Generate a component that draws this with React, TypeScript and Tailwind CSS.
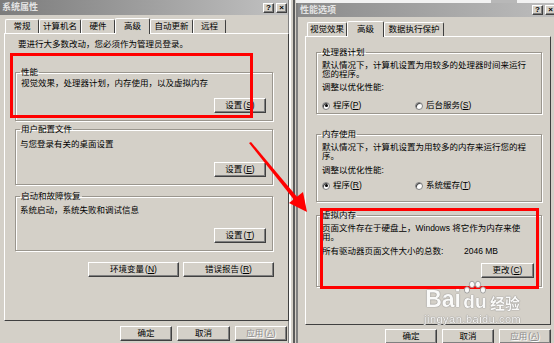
import React from 'react';

const raised =
  'bg-[#d4d0c8] border border-t-white border-l-white border-r-[#404040] border-b-[#404040] shadow-[inset_-1px_-1px_0_#808080]';

type BtnProps = { label: string; acc?: string; className?: string; disabled?: boolean };

const Btn = ({ label, acc, className = '', disabled = false }: BtnProps) => (
  <div
    className={`${raised} h-[15px] flex items-center justify-center text-[8.5px] leading-none ${
      disabled ? 'text-[#8c8c8c] [text-shadow:1px_1px_0_#fff]' : 'text-black'
    } ${className}`}
  >
    <span>{label}</span>
    {acc && (
      <span className="ml-[1px]">
        (<span className="underline">{acc}</span>)
      </span>
    )}
  </div>
);

const CapBtn = ({ children }: { children: React.ReactNode }) => (
  <div className={`${raised} w-[11px] h-[10px] flex items-center justify-center text-[8px] font-bold leading-none text-black`}>
    {children}
  </div>
);

const Tab = ({ label, className = '', active = false }: { label: string; className?: string; active?: boolean }) => (
  <div
    className={`border-t border-l border-r border-t-white border-l-white border-r-[#404040] rounded-t-[2px] flex items-center justify-center text-[8.5px] leading-none bg-[#d4d0c8] ${
      active ? 'h-[16px] relative z-10 -mb-px' : 'h-[14px]'
    } ${className}`}
  >
    {label}
  </div>
);

const Group = ({ title, className = '', children }: { title: string; className?: string; children: React.ReactNode }) => (
  <fieldset className={`border border-[#9a968e] shadow-[inset_1px_1px_0_#fff,1px_1px_0_#fff] ${className}`}>
    <legend className="ml-[4px] px-[1px] text-[8.5px] leading-[10px]">{title}</legend>
    {children}
  </fieldset>
);

const Radio = ({ label, acc, checked = false, className = '' }: { label: string; acc: string; checked?: boolean; className?: string }) => (
  <div className={`flex items-center gap-[3px] text-[8.5px] leading-[9px] ${className}`}>
    <span className="w-[8px] h-[8px] rounded-full bg-white border border-[#808080] shadow-[inset_1px_1px_0_#404040] flex items-center justify-center">
      {checked && <span className="w-[3px] h-[3px] rounded-full bg-black" />}
    </span>
    <span>
      {label}(<span className="underline">{acc}</span>)
    </span>
  </div>
);

const SystemProperties = () => (
  <div className="w-[289px] shrink-0 flex flex-col bg-[#d4d0c8] border-r border-[#808080]">
    <div className="h-[15px] flex items-center bg-gradient-to-r from-[#7c7c7c] to-[#c2c2c2] pl-[2px] pr-[1px]">
      <span className="text-[9px] font-bold text-[#e4e4e4] leading-none">系统属性</span>
      <div className="ml-auto flex gap-[2px]">
        <CapBtn>?</CapBtn>
        <CapBtn>×</CapBtn>
      </div>
    </div>

    <div className="mt-[2px] h-[16px] flex items-end pl-[5px]">
      <Tab label="常规" className="w-[34px]" />
      <Tab label="计算机名" className="w-[42px]" />
      <Tab label="硬件" className="w-[34px]" />
      <Tab label="高级" className="w-[35px]" active />
      <Tab label="自动更新" className="w-[43px]" />
      <Tab label="远程" className="w-[33px]" />
    </div>

    <div className="ml-[4px] w-[285px] h-[288px] border border-t-white border-l-white border-r-[#404040] border-b-[#404040] pl-[10px] flex flex-col">
      <p className="mt-[5px] ml-[3px] text-[8.5px] leading-[10px]">要进行大多数改动，您必须作为管理员登录。</p>

      <Group title="性能" className="mt-[18px] w-[258px] h-[54px]">
        <div className="flex flex-col">
          <p className="mt-[1px] ml-[5px] text-[8.5px] leading-[10px]">视觉效果，处理器计划，内存使用，以及虚拟内存</p>
          <Btn label="设置" acc="S" className="mt-[10px] self-end mr-[6px] w-[52px]" />
        </div>
      </Group>

      <Group title="用户配置文件" className="mt-[3px] w-[258px] h-[61px]">
        <div className="flex flex-col">
          <p className="mt-[5px] ml-[4px] text-[8.5px] leading-[10px]">与您登录有关的桌面设置</p>
          <Btn label="设置" acc="E" className="mt-[13px] self-end mr-[6px] w-[52px]" />
        </div>
      </Group>

      <Group title="启动和故障恢复" className="mt-[6px] w-[258px] h-[60px]">
        <div className="flex flex-col">
          <p className="mt-[4px] ml-[4px] text-[8.5px] leading-[10px]">系统启动，系统失败和调试信息</p>
          <Btn label="设置" acc="T" className="mt-[13px] self-end mr-[6px] w-[52px]" />
        </div>
      </Group>

      <div className="mt-[11px] w-[259px] flex justify-end gap-[4px]">
        <Btn label="环境变量" acc="N" className="w-[91px]" />
        <Btn label="错误报告" acc="R" className="w-[91px]" />
      </div>
    </div>

    <div className="mt-[5px] flex justify-end gap-[5px] pr-[1px]">
      <Btn label="确定" className="w-[52px]" />
      <Btn label="取消" className="w-[53px]" />
      <Btn label="应用" acc="A" className="w-[52px]" disabled />
    </div>
  </div>
);

const PerformanceOptions = () => (
  <div className="flex-1 flex flex-col min-w-0">
    <div className="h-[5px] bg-[#f2f2f2] flex justify-end pr-[37px]">
      <div className="w-[26px] h-[3px] bg-[#b8b8b8]" />
    </div>
    <div className="flex-1 flex flex-col bg-[#d4d0c8] border-l-2 border-l-[#808080]">
      <div className="h-[14px] flex items-center bg-gradient-to-r from-[#8a8a8a] to-[#bdbdbd] pl-[2px]">
        <span className="text-[9px] font-bold text-[#e4e4e4] leading-none">性能选项</span>
        <div className="ml-auto flex gap-[2px] -mr-[2px]">
          <CapBtn>?</CapBtn>
          <CapBtn>×</CapBtn>
        </div>
      </div>

      <div className="mt-[3px] h-[16px] flex items-end pl-[9px]">
        <Tab label="视觉效果" className="w-[40px]" />
        <Tab label="高级" className="w-[37px]" active />
        <Tab label="数据执行保护" className="w-[60px]" />
      </div>

      <div className="ml-[7px] w-[246px] h-[289px] border border-t-white border-l-white border-r-[#404040] border-b-[#404040] pl-[10px] flex flex-col">
        <Group title="处理器计划" className="mt-[10px] w-[226px] h-[67px]">
          <div className="flex flex-col pl-[5px] text-[8.5px] leading-[9px]">
            <p className="mt-[4px]">
              默认情况下，计算机设置为用较多的处理器时间来运行
              <br />
              您的程序。
            </p>
            <p className="mt-[4px]">调整以优化性能:</p>
            <div className="mt-[9px] flex">
              <Radio label="程序" acc="P" checked className="w-[93px]" />
              <Radio label="后台服务" acc="S" />
            </div>
          </div>
        </Group>

        <Group title="内存使用" className="mt-[15px] w-[226px] h-[73px]">
          <div className="flex flex-col pl-[5px] text-[8.5px] leading-[9px]">
            <p className="mt-[4px]">
              默认情况下，计算机设置为用较多的内存来运行您的程
              <br />
              序。
            </p>
            <p className="mt-[5px]">调整以优化性能:</p>
            <div className="mt-[6px] flex">
              <Radio label="程序" acc="R" checked className="w-[93px]" />
              <Radio label="系统缓存" acc="T" />
            </div>
          </div>
        </Group>

        <Group title="虚拟内存" className="mt-[8px] w-[226px] h-[77px]">
          <div className="flex flex-col pl-[5px] text-[8.5px] leading-[9px]">
            <p className="mt-[4px]">
              页面文件存在于硬盘上，Windows 将它作为内存来使
              <br />
              用。
            </p>
            <div className="mt-[5px] flex">
              <span className="w-[142px]">所有驱动器页面文件大小的总数:</span>
              <span>2046 MB</span>
            </div>
            <Btn label="更改" acc="C" className="mt-[7px] self-end mr-[7px] w-[53px]" />
          </div>
        </Group>
      </div>

      <div className="mt-[4px] flex gap-[5px] pl-[87px]">
        <Btn label="确定" className="w-[52px]" />
        <Btn label="取消" className="w-[52px]" />
        <Btn label="应用" acc="A" className="w-[52px]" disabled />
      </div>
    </div>
  </div>
);

const Watermark = () => (
  <div className="absolute left-[424px] top-[280px] flex flex-col items-center text-white opacity-90 [text-shadow:0_0_1px_#777,0_0_1px_#777]">
    <div className="flex items-end leading-none">
      <span className="text-[23px] font-bold font-['Liberation_Sans',sans-serif]">Bai</span>
      <div className="relative ml-[2px] flex flex-col items-center">
        <svg width="24" height="14" viewBox="0 0 24 14" className="mb-[-2px]">
          <g fill="#fff" stroke="#888" strokeWidth="0.8">
            <ellipse cx="4" cy="10" rx="2.6" ry="3.2" />
            <ellipse cx="9" cy="4.5" rx="2.6" ry="3.3" />
            <ellipse cx="15" cy="4.5" rx="2.6" ry="3.3" />
            <ellipse cx="20" cy="10" rx="2.6" ry="3.2" />
          </g>
        </svg>
        <span className="text-[19px] font-bold font-['Liberation_Sans',sans-serif]">du</span>
      </div>
      <span className="ml-[3px] mb-[1px] text-[15px] font-bold font-['Noto_Sans_CJK_SC',sans-serif]">经验</span>
    </div>
    <span className="mt-[3px] text-[11px] tracking-[0.5px] font-['Liberation_Sans',sans-serif] leading-none">jingyan.baidu.com</span>
  </div>
);

export default function App() {
  return (
    <div className="relative w-[554px] h-[343px] overflow-hidden flex bg-[#d4d0c8] text-black font-['Liberation_Sans','Noto_Sans_CJK_SC',sans-serif]">
      <SystemProperties />
      <div className="w-[7px] shrink-0 flex">
        <div className="w-[2px] bg-white" />
        <div className="w-[2px] bg-[#d4d0c8]" />
        <div className="w-[2px] bg-[#5a5a5a]" />
        <div className="w-[1px] bg-[#d4d0c8]" />
      </div>
      <PerformanceOptions />

      {/* red annotations */}
      <div className="absolute left-[10px] top-[53px] w-[243px] h-[65px] border-[3px] border-[#ff0000]" />
      <div className="absolute left-[320px] top-[208px] w-[219px] h-[81px] border-[3px] border-[#ff0000]" />
      <svg className="absolute inset-0 pointer-events-none" width="554" height="343" viewBox="0 0 554 343">
        <polygon points="249,143 251,142 298,198 295,201" fill="#ff0000" />
        <polygon points="307,212 289,203 303,192" fill="#ff0000" />
      </svg>

      <Watermark />
    </div>
  );
}
